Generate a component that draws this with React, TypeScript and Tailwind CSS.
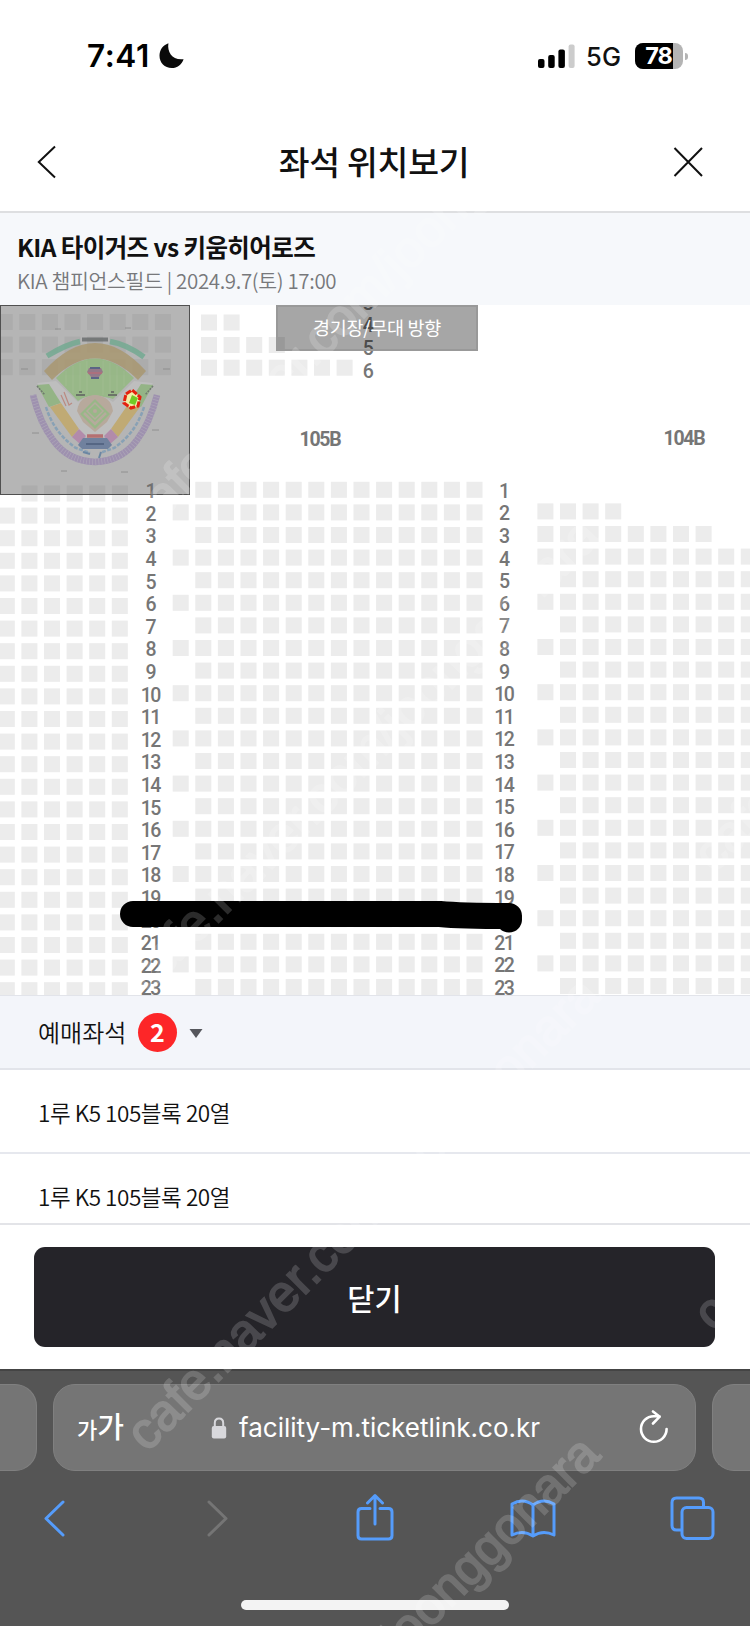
import type { ReactNode } from 'react'

const SEAT = 16
const PITCH = 22.6

type Seat = { x: number; y: number }

function seatRow(x: number, y: number, count: number): Seat[] {
  return Array.from({ length: count }, (_, i) => ({ x: x + i * PITCH, y }))
}

// Coordinates are relative to the top left corner of the map area
function buildSeats(): Seat[] {
  const seats: Seat[] = []

  // upper block
  for (let r = 0; r < 3; r++) seats.push(...seatRow(-3.3, 9 + r * PITCH, 8))
  seats.push(...seatRow(201, 9.5, 2))
  seats.push(...seatRow(201, 32, 4))
  seats.push(...seatRow(201, 54.7, 7))

  for (let row = 1; row <= 23; row++) {
    const dy = (row - 1) * PITCH

    // left block
    if (row === 1) seats.push(...seatRow(21.5, 180.5, 5))
    else seats.push(...seatRow(-1.2, 180 + dy, 6))

    // 105B, even rows have one more seat on the left
    if (row % 2 === 0) seats.push(...seatRow(172.7, 176.8 + dy, 14))
    else seats.push(...seatRow(195.3, 176.8 + dy, 13))

    // 104B
    const y = 175.8 + dy
    if (row === 2) seats.push(...seatRow(537.4, y, 4))
    else if (row === 3) seats.push(...seatRow(537.4, y, 8))
    else if (row > 3 && row % 2 === 0) seats.push(...seatRow(537.4, y, 10))
    else if (row > 3) seats.push(...seatRow(560, y, 9))
  }
  return seats
}

const seats = buildSeats()
const rows = Array.from({ length: 23 }, (_, i) => i + 1)
const bookedSeats = ['1루 K5 105블록 20열', '1루 K5 105블록 20열']

function StatusBar() {
  return (
    <div className="flex h-[112px] shrink-0 items-start justify-between pl-[87px] pr-[62px] pt-[36px] font-[Inter]">
      <div className="flex h-[40px] items-center">
        <span className="w-[70px] text-[31.5px] font-semibold tracking-[0.6px] text-black">7:41</span>
        <svg width="28" height="28" viewBox="0 0 28 28" className="ml-px">
          <path d="M10.4 1.3C9 10.5 14.5 18.6 25.6 17.2C23.6 23 19.2 26 13.8 26C6.6 26 1.5 20.8 1.5 13.8C1.5 8 4.8 3.4 10.4 1.3Z" fill="#0a0a0a" />
        </svg>
      </div>
      <div className="flex h-[40px] items-center">
        <svg width="40" height="28" viewBox="0 0 40 28">
          <rect x="1" y="17" width="6.5" height="9" rx="2" fill="#000" />
          <rect x="11.2" y="13" width="6.5" height="13" rx="2" fill="#000" />
          <rect x="21.4" y="7.5" width="6.5" height="18.5" rx="2" fill="#000" />
          <rect x="31.6" y="2.5" width="6" height="23.5" rx="2" fill="#ccc" />
        </svg>
        <span className="ml-[9px] w-[49px] pt-[2px] text-[25.5px] font-medium tracking-[0.3px] text-[#111]">5G</span>
        <div className="flex h-[26px] w-[48px] overflow-hidden rounded-[8px] bg-[#b4b4b4]">
          <div className="flex w-[38px] items-center justify-end bg-black pr-[1px] text-[23.5px] font-bold tracking-[-0.9px] text-white">78</div>
        </div>
        <div className="ml-[2px] h-[7px] w-[3px] rounded-r-full bg-[#b4b4b4]" />
      </div>
    </div>
  )
}

function Header() {
  return (
    <div className="flex h-[101px] shrink-0 items-center justify-between border-b-2 border-[#dedfe1] pl-[36px] pr-[46px]">
      <svg width="42" height="36" viewBox="0 0 42 36" fill="none" stroke="#111" strokeWidth="2">
        <path d="M19 2.5L2.8 18L19 33.5" />
      </svg>
      <h1 className="pb-[1px] pr-[2px] text-[33.5px] font-medium tracking-[-0.3px] text-[#111]">좌석 위치보기</h1>
      <svg width="32" height="32" viewBox="0 0 32 32" fill="none" stroke="#111" strokeWidth="2">
        <path d="M2.5 2L30 30M30 2L2.5 30" />
      </svg>
    </div>
  )
}

function MiniMap() {
  return (
    <div className="absolute left-0 top-0 h-[190px] w-[190px] border border-[#505050] bg-[#6b6b6b]/50">
      <svg width="188" height="188" viewBox="1 1 188 188" fill="none">
        <g opacity="0.85">
          <path d="M47 51Q67 39 80 36.5M110 36.5Q126 39 144 52" stroke="#74aa92" strokeWidth="5.5" />
          <path d="M82 34.5H108" stroke="#6c6f70" strokeWidth="4" />
          <path d="M44 66Q95 10 146 66L138 75Q95 32 52 75Z" fill="#a99871" />
          <path d="M56 73Q95 34 134 73L113 94Q108 92 95 91Q84 91 78 96Z" fill="#94b981" />
          <path d="M66 66V81M73 61V88M80 58V91M87 56V90M103 56V90M110 58V91M117 61V88M124 66V81" stroke="#a2c194" strokeWidth="0.6" />
          <path d="M56 76L37 78L61 108L84 132L107 132L130 106L153 78L134 76L113 97Q95 84 78 97Z" fill="#c0c0c0" />
          <path d="M77 106Q79 91 95 90Q111 91 113 106L107 117L95 127L83 117Z" fill="#b8a798" />
          <path d="M95 94L110 109L95 124L80 109Z" fill="#93b880" />
          <path d="M84 108L95 119L106 108" stroke="#b5aa98" strokeWidth="2.5" />
          <path d="M95 98L103 106L95 114L87 106Z" stroke="#b5ab9b" strokeWidth="1.5" />
          <circle cx="95" cy="106" r="2" fill="#b8a798" />
          <path d="M89 63H101L103 67L98 73H92L87 67Z" fill="#8f7184" />
          <path d="M90 63H100M91 73H99" stroke="#4d587f" strokeWidth="2" />
          <path d="M88 68H102" stroke="#b66371" strokeWidth="1.5" />
          <path d="M79 86H82V88H79ZM76 89H85V91H76ZM111 86H114V88H111ZM108 89H117V91H108Z" fill="#606a5c" />
          <path d="M37 80L49 79L61 98L49 102Z" fill="#8fb47e" />
          <path d="M153 80L141 79L129 98L141 102Z" fill="#8fb47e" />
          <path d="M50 102L61 98L79 124L72 132Z" fill="#c2a969" />
          <path d="M140 102L129 98L111 124L118 132Z" fill="#c2a969" />
          <path d="M72 132L79 124L86 131L80 139Z" fill="#b284aa" />
          <path d="M118 132L111 124L104 131L110 139Z" fill="#b284aa" />
          <path d="M83 133H107L112 140L108 144H82L78 140Z" fill="#65799b" />
          <path d="M86 139H104" stroke="#45597c" strokeWidth="2" />
          <path d="M87 131H103" stroke="#b66567" strokeWidth="3.5" />
          <path d="M46 102Q54 128 76 143L90 148M144 102Q136 128 114 143L100 148" stroke="#819eb5" strokeWidth="2.5" strokeDasharray="4 1.5" />
          <path d="M33 90Q40 118 53 135Q68 156 95 157Q122 156 137 135Q150 118 157 90" stroke="#9a8baf" strokeWidth="6.5" />
          <path d="M33 90Q40 118 53 135Q68 156 95 157Q122 156 137 135Q150 118 157 90" stroke="#aaa1b6" strokeWidth="6.5" strokeDasharray="0.8 2.2" />
          <path d="M83 147L90 149M99 153L101 147" stroke="#6080a0" strokeWidth="2" />
          <path d="M64 87L69 100L72 98M61 90L66 101" stroke="#bd8379" strokeWidth="1.2" />
          <path d="M37 81L45 90M153 81L145 90" stroke="#657064" strokeWidth="1.6" strokeDasharray="2 1" />
          <path d="M55 24H61M125 23H131M21 64H28M163 64H170M32 128H39M152 125H159M61 166H67M121 167H128" stroke="#8a8a8a" strokeWidth="1" />
        </g>
        <path d="M126 89L132 85L140 92L138 101L131 103L124 98Z" fill="#f2eea8" />
        <path d="M126 89L132 85L140 92L138 101L131 103L124 98Z" stroke="#e3210f" strokeWidth="3" strokeDasharray="6 1.5" />
        <path d="M132 90L138 93L135 100L129 98Z" fill="#71cb26" />
      </svg>
    </div>
  )
}

function SeatMap() {
  return (
    <div className="relative h-[690px] shrink-0 overflow-hidden bg-white">
      <svg width="750" height="690" viewBox="0 0 750 690" className="absolute left-0 top-0">
        {seats.map((s, i) => (
          <rect key={i} x={s.x} y={s.y} width={SEAT} height={SEAT} fill="#ececec" />
        ))}
        <g fill="#767676" fontFamily="Roboto, sans-serif" fontSize="19.5" fontWeight="500" letterSpacing="-1.5" textAnchor="middle">
          {[3, 4, 5, 6].map((n) => (
            <text key={n} x="367.5" y={4.8 + (n - 3) * PITCH}>{n}</text>
          ))}
          {rows.map((n) => (
            <g key={n}>
              <text x="150.3" y={193.2 + (n - 1) * 22.6}>{n}</text>
              <text x="503.8" y={192.8 + (n - 1) * 22.6}>{n}</text>
            </g>
          ))}
          <text x="320" y="140.5" fontWeight="700" letterSpacing="-1.2">105B</text>
          <text x="684" y="140" fontWeight="700" letterSpacing="-1.2">104B</text>
        </g>
        <path d="M133 609H440Q460 611 509 611" fill="none" stroke="#000" strokeWidth="26" strokeLinecap="round" />
        <circle cx="509" cy="614.5" r="13" fill="#000" />
      </svg>
      <MiniMap />
      <div className="absolute left-[276px] top-0 flex h-[46px] w-[202px] items-center justify-center border-2 border-[#999] bg-black/35 text-[18.5px] tracking-[-0.3px] text-white">
        경기장/무대 방향
      </div>
    </div>
  )
}

function BookedSeats() {
  return (
    <div className="flex h-[230px] shrink-0 flex-col overflow-hidden border-b-2 border-[#e3e4e8] bg-white text-[#111]">
      <div className="flex h-[75px] shrink-0 items-center border-b-2 border-t border-[#e2e4ea] bg-[#f3f5fa] pl-[38px]">
        <span className="w-[100px] text-[24px] font-[350]">예매좌석</span>
        <span className="flex h-[39px] w-[39px] items-center justify-center rounded-full bg-[#fd2628] text-[25px] font-bold text-white">2</span>
        <svg width="14" height="14" viewBox="0 0 14 14" className="ml-[12px]">
          <path d="M0.5 4H13.5L7 13Z" fill="#55565c" />
        </svg>
      </div>
      {bookedSeats.map((seat, i) => (
        <div key={i} className="flex h-[84px] shrink-0 items-center border-b-2 border-[#e6e8ee] pl-[38px] pt-[3px] text-[22.5px] font-[350] tracking-[-0.45px]">
          {seat}
        </div>
      ))}
    </div>
  )
}

function ToolbarIcon({ width, children }: { width: number; children: ReactNode }) {
  return (
    <svg width={width} height="50" viewBox={`0 0 ${width} 50`} fill="none" stroke="#559cfb" strokeWidth="3" strokeLinecap="round" strokeLinejoin="round">
      {children}
    </svg>
  )
}

function BrowserBar() {
  return (
    <div className="flex h-[257px] shrink-0 flex-col border-t-2 border-[#444] bg-[#555]">
      <div className="flex h-[100px] justify-between pt-[13px]">
        <div className="h-[87px] w-[37px] rounded-r-[22px] border border-l-0 border-[#808080] bg-[#757575]" />
        <div className="flex h-[87px] w-[643px] items-center rounded-[22px] border border-[#808080] bg-[#757575] pl-[23px] text-white">
          <span className="flex w-[134px] items-baseline pb-[3px]">
            <span className="text-[22px] font-medium">가</span>
            <span className="text-[29px] font-medium">가</span>
          </span>
          <svg width="16" height="22" viewBox="0 0 16 22">
            <path d="M3.8 10V6Q3.8 1.5 8 1.5Q12.2 1.5 12.2 6V10" fill="none" stroke="#d8d8dc" strokeWidth="2" />
            <rect x="0.8" y="9" width="14.4" height="12.5" rx="2" fill="#d8d8dc" />
          </svg>
          <span className="ml-[12px] w-[399px] font-[Inter] text-[26px]">facility-m.ticketlink.co.kr</span>
          <svg width="32" height="36" viewBox="0 0 32 36" fill="none" stroke="#fff" strokeWidth="2.6" strokeLinecap="round" strokeLinejoin="round">
            <path d="M28.6 19A12.8 12.8 0 1 1 15.8 6.2H21.5M15 1.500L21.7 6.7L15 13.500" />
          </svg>
        </div>
        <div className="h-[87px] w-[38px] rounded-l-[22px] border border-r-0 border-[#808080] bg-[#757575]" />
      </div>
      <div className="flex h-[94px] items-center justify-between pl-[42px] pr-[35px]">
        <ToolbarIcon width={42}>
          <path d="M21 9L4 25.5L21 42" />
        </ToolbarIcon>
        <svg width="46" height="50" viewBox="0 0 46 50" fill="none" stroke="#757575" strokeWidth="3" strokeLinecap="round" strokeLinejoin="round">
          <path d="M13 9L30 25.5L13 42" />
        </svg>
        <ToolbarIcon width={42}>
          <path d="M15 15.5H6.5Q3 15.5 3 19V42.5Q3 46 6.5 46H33.5Q37 46 37 42.5V19Q37 15.5 33.5 15.5H25M20 31V3M12.5 10L20 2.5L27.5 10" />
        </ToolbarIcon>
        <ToolbarIcon width={48}>
          <path d="M24 12Q14 4.5 3 11V42Q14 36.5 24 43Q34 36.5 45 42V11Q34 4.5 24 12ZM24 12V43" />
        </ToolbarIcon>
        <ToolbarIcon width={46}>
          <path d="M12 37H7.5Q3 37 3 32.5V9.5Q3 5 7.5 5H30Q34.5 5 34.5 9.5V14" />
          <rect x="13" y="14.5" width="31" height="31" rx="4.5" />
        </ToolbarIcon>
      </div>
      <div className="mx-auto mt-[35px] h-[10px] w-[268px] rounded-full bg-[#f3f3f3]" />
    </div>
  )
}

// Diagonal marks repeated over the whole screen
function Watermark() {
  const marks = [
    [147, 535],
    [147, 994],
    [147, 1453],
    [147, 1912],
    [714, 874],
    [714, 1333],
  ]
  return (
    <svg width="750" height="1626" viewBox="0 0 750 1626" className="pointer-events-none absolute left-0 top-0">
      <g opacity="0.17" fill="#fff" stroke="#fff" strokeWidth="1.8" fontFamily="'Liberation Sans', sans-serif" fontSize="51">
        {marks.map(([x, y]) => (
          <text key={`${x}-${y}`} transform={`translate(${x} ${y}) rotate(-45)`}>cafe.naver.com/joonggonara</text>
        ))}
      </g>
    </svg>
  )
}

export default function App() {
  return (
    <div className="relative flex h-[1626px] w-[750px] flex-col overflow-hidden bg-white font-['Noto_Sans_CJK_KR',sans-serif]">
      <StatusBar />
      <Header />
      <div className="flex h-[92px] shrink-0 flex-col bg-[#f6f8fb] pl-[17px] pt-[18px]">
        <p className="text-[24.5px] font-bold leading-[32px] tracking-[-0.6px] text-[#111]">KIA 타이거즈 vs 키움히어로즈</p>
        <p className="pt-px text-[20.5px] font-[350] leading-[32px] tracking-[-0.35px] text-[#77787b]">KIA 챔피언스필드 | 2024.9.7(토) 17:00</p>
      </div>
      <SeatMap />
      <BookedSeats />
      <div className="flex h-[144px] shrink-0 flex-col px-[34px] pt-[22px]">
        <button className="h-[100px] w-[681px] rounded-[11px] bg-[#252429] text-[29.5px] font-medium text-white">닫기</button>
      </div>
      <BrowserBar />
      <Watermark />
    </div>
  )
}
